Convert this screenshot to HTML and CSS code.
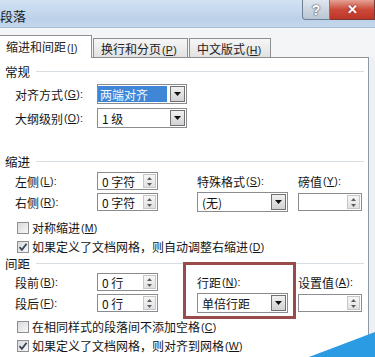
FILE: index.html
```html
<!DOCTYPE html>
<html lang="zh-CN">
<head>
    <meta charset="UTF-8" />
    <title>段落</title>
    <link rel="stylesheet" href="styles.css">
</head>
<body>
    <div class="dialog">
        <div class="titlebar">
            <span class="title">段落</span>
            <div class="caption-btns">
                <span class="cap-btn help">?</span>
                <span class="cap-btn close">✕</span>
            </div>
        </div>

        <div class="tabs">
            <div class="tab active">缩进和间距<span class="key">(<u>I</u>)</span></div>
            <div class="tab">换行和分页<span class="key">(<u>P</u>)</span></div>
            <div class="tab">中文版式<span class="key">(<u>H</u>)</span></div>
        </div>

        <div class="panel">
            <div class="group-title">常规</div>
            <div class="general-grid">
                <div class="label">对齐方式<span class="key">(<u>G</u>):</span></div>
                <div class="combo">
                    <span class="value selected">两端对齐</span>
                    <span class="drop"><svg width="7" height="4" viewBox="0 0 7 4"><path d="M0 0h7L3.5 4z"/></svg></span>
                </div>
                <div class="label">大纲级别<span class="key">(<u>O</u>):</span></div>
                <div class="combo">
                    <span class="value">1 级</span>
                    <span class="drop"><svg width="7" height="4" viewBox="0 0 7 4"><path d="M0 0h7L3.5 4z"/></svg></span>
                </div>
            </div>

            <div class="group-title indent-title">缩进</div>
            <div class="field-grid">
                <div class="label">左侧<span class="key">(<u>L</u>):</span></div>
                <div class="spinner"><span class="value">0 字符</span><span class="spin"><svg width="7" height="11" viewBox="0 0 7 11"><path d="M3.5 1L6 4H1zM1 7h5L3.5 10z"/></svg></span></div>
                <div class="label col-special">特殊格式<span class="key">(<u>S</u>):</span></div>
                <div class="label col-value">磅值<span class="key">(<u>Y</u>):</span></div>
                <div class="label">右侧<span class="key">(<u>R</u>):</span></div>
                <div class="spinner"><span class="value">0 字符</span><span class="spin"><svg width="7" height="11" viewBox="0 0 7 11"><path d="M3.5 1L6 4H1zM1 7h5L3.5 10z"/></svg></span></div>
                <div class="combo col-special">
                    <span class="value">(无)</span>
                    <span class="drop"><svg width="7" height="4" viewBox="0 0 7 4"><path d="M0 0h7L3.5 4z"/></svg></span>
                </div>
                <div class="spinner col-value"><span class="value"></span><span class="spin"><svg width="7" height="11" viewBox="0 0 7 11"><path d="M3.5 1L6 4H1zM1 7h5L3.5 10z"/></svg></span></div>
            </div>
            <div class="check-row first">
                <span class="cb"></span>对称缩进<span class="key">(<u>M</u>)</span>
            </div>
            <div class="check-row">
                <span class="cb checked"><svg width="10" height="10" viewBox="0 0 10 10"><path d="M1.5 5.2l2.4 2.6L8.6 1.8" /></svg></span>如果定义了文档网格，则自动调整右缩进<span class="key">(<u>D</u>)</span>
            </div>

            <div class="group-title spacing-title">间距</div>
            <div class="spacing-block">
                <div class="field-grid">
                    <div class="label">段前<span class="key">(<u>B</u>):</span></div>
                    <div class="spinner"><span class="value">0 行</span><span class="spin"><svg width="7" height="11" viewBox="0 0 7 11"><path d="M3.5 1L6 4H1zM1 7h5L3.5 10z"/></svg></span></div>
                    <div class="label col-special">行距<span class="key">(<u>N</u>):</span></div>
                    <div class="label col-value">设置值<span class="key">(<u>A</u>):</span></div>
                    <div class="label">段后<span class="key">(<u>F</u>):</span></div>
                    <div class="spinner"><span class="value">0 行</span><span class="spin"><svg width="7" height="11" viewBox="0 0 7 11"><path d="M3.5 1L6 4H1zM1 7h5L3.5 10z"/></svg></span></div>
                    <div class="combo col-special">
                        <span class="value">单倍行距</span>
                        <span class="drop"><svg width="7" height="4" viewBox="0 0 7 4"><path d="M0 0h7L3.5 4z"/></svg></span>
                    </div>
                    <div class="spinner col-value"><span class="value"></span><span class="spin"><svg width="7" height="11" viewBox="0 0 7 11"><path d="M3.5 1L6 4H1zM1 7h5L3.5 10z"/></svg></span></div>
                </div>
                <div class="mark-box"></div>
            </div>
            <div class="check-row third">
                <span class="cb"></span>在相同样式的段落间不添加空格<span class="key">(<u>C</u>)</span>
            </div>
            <div class="check-row">
                <span class="cb checked"><svg width="10" height="10" viewBox="0 0 10 10"><path d="M1.5 5.2l2.4 2.6L8.6 1.8" /></svg></span>如果定义了文档网格，则对齐到网格<span class="key">(<u>W</u>)</span>
            </div>
        </div>

        <svg class="corner-mark" width="66" height="25" viewBox="0 0 66 25">
            <path d="M0 25L66 0V25z" fill="#2b9be3"/>
        </svg>
    </div>
</body>
</html>
```

FILE: styles.css
```css
html, body {
    margin: 0;
    padding: 0;
}
body {
    width: 375px;
    height: 357px;
    overflow: hidden;
    font-family: "Noto Sans CJK SC", "Liberation Sans", sans-serif;
    font-size: 12px;
    color: #141414;
    background: #eef0f3;
}
.dialog {
    position: relative;
    height: 357px;
    overflow: hidden;
}

/* title bar */
.titlebar {
    height: 28px;
    display: flex;
    justify-content: space-between;
    background: linear-gradient(#d2e2f3, #bcd1e8 70%, #c4d7ec);
    border-bottom: 1px solid #a9bdd3;
    box-sizing: border-box;
}
.title {
    margin-left: 0;
    padding-top: 6px;
    font-size: 13px;
    color: #1a1a1a;
}
.caption-btns {
    display: flex;
    align-items: flex-start;
}
.cap-btn {
    height: 20px;
    display: flex;
    align-items: center;
    justify-content: center;
    box-sizing: border-box;
    font-family: "Liberation Sans", sans-serif;
    font-weight: bold;
    color: #fff;
}
.help {
    width: 28px;
    border: 1px solid #6e8094;
    border-top: none;
    border-radius: 0 0 0 4px;
    background: linear-gradient(#dfe6ee, #b9c6d4);
    font-size: 14px;
    text-shadow: 0 0 2px #3a4a5c, 0 0 1px #3a4a5c;
}
.close {
    width: 45px;
    border: 1px solid #7a3a33;
    border-top: none;
    border-left: none;
    background: linear-gradient(#e4a293, #cc4a3a 50%, #bd3426);
    font-size: 13px;
    text-shadow: 0 0 2px #6d1e16;
}

/* tabs */
.tabs {
    height: 29px;
    display: flex;
    align-items: flex-end;
    gap: 1px;
    background: #f4f5f7;
}
.tab {
    height: 19px;
    box-sizing: border-box;
    border: 1px solid #8d8f92;
    border-bottom: none;
    background: linear-gradient(#f6f6f6, #e2e2e2);
    padding: 1px 0 0 7px;
    line-height: 17px;
    color: #222;
}
.tab:nth-child(2) { width: 95px; }
.tab:nth-child(3) { width: 82px; }
.tab.active {
    width: 94px;
    height: 23px;
    margin-left: -2px;
    margin-bottom: -1px;
    padding-top: 2px;
    background: #fff;
    position: relative;
    z-index: 1;
}
.key {
    font-family: "Liberation Sans", sans-serif;
    font-size: 10.5px;
    margin-left: 1px;
    letter-spacing: 0.3px;
}

/* panel */
.panel {
    width: 369px;
    height: 300px;
    box-sizing: border-box;
    background: #fff;
    border-top: 1px solid #8d8f92;
    border-right: 1px solid #8d9aa6;
    padding-top: 4px;
}
.group-title {
    display: flex;
    align-items: center;
    height: 18px;
    padding-left: 5px;
    padding-right: 4px;
    font-size: 12.5px;
}
.group-title::after {
    content: "";
    flex: 1;
    margin-left: 6px;
    border-top: 1px solid #d6dde3;
}
.indent-title { margin-top: 24px; }
.spacing-title {
    height: 16px;
    margin-top: -1px;
}

.label {
    display: flex;
    align-items: center;
    white-space: nowrap;
}

.general-grid {
    display: grid;
    grid-template-columns: 82px 90px;
    grid-auto-rows: 20px;
    row-gap: 4px;
    padding-left: 15px;
    margin-top: 4px;
}
.field-grid {
    display: grid;
    grid-template-columns: 82px 61px 39px 91px 10px 64px;
    grid-auto-rows: 20px;
    row-gap: 1px;
    padding-left: 15px;
    margin-top: 1px;
}
.field-grid > :nth-child(1),
.field-grid > :nth-child(5) { grid-column: 1; }
.field-grid > :nth-child(2),
.field-grid > :nth-child(6) { grid-column: 2; }
.field-grid .col-special { grid-column: 4; }
.field-grid .col-value { grid-column: 6; }

/* combo boxes and spinners */
.combo, .spinner {
    display: flex;
    align-items: stretch;
    box-sizing: border-box;
    border: 1px solid #8a8c8f;
    background: #fff;
}
.spinner {
    height: 18px;
    align-self: center;
}
.combo .value, .spinner .value {
    flex: 1;
    display: flex;
    align-items: center;
    padding-left: 4px;
    white-space: nowrap;
}
.combo .value.selected {
    margin: 1px 2px 1px 0;
    padding-left: 2px;
    background: #3f87d6;
    color: #f4f8ff;
}
.drop {
    width: 15px;
    display: flex;
    align-items: center;
    justify-content: center;
    box-sizing: border-box;
    margin: 1px;
    border: 1px solid #6f7174;
    background: linear-gradient(#f0f0f0, #d2d2d2);
}
.drop svg path { fill: #111; }
.spin {
    width: 13px;
    display: flex;
    align-items: center;
    justify-content: center;
    box-sizing: border-box;
    margin: 1px;
    border: 1px solid #c4c6c9;
    background: linear-gradient(#f7f7f7, #e1e1e1);
}
.spin svg path { fill: #5d6166; }

/* checkboxes */
.check-row {
    height: 19px;
    display: flex;
    align-items: center;
    padding-left: 17px;
    white-space: nowrap;
}
.check-row.first { margin-top: 6px; }
.check-row.third { margin-top: 4px; }
.cb {
    width: 12px;
    height: 12px;
    box-sizing: border-box;
    margin-right: 3px;
    border: 1px solid #8e8f91;
    background: linear-gradient(135deg, #d8d9db, #f8f8f8);
    display: flex;
    align-items: center;
    justify-content: center;
}
.cb svg path {
    fill: none;
    stroke: #37465a;
    stroke-width: 1.8;
}

/* red annotation around line spacing */
.spacing-block {
    position: relative;
}
.mark-box {
    position: absolute;
    left: 183px;
    top: -10px;
    width: 113px;
    height: 57px;
    box-sizing: border-box;
    border: 3px solid #9b4a4c;
}

.corner-mark {
    position: absolute;
    right: 0;
    bottom: 0;
}
```
